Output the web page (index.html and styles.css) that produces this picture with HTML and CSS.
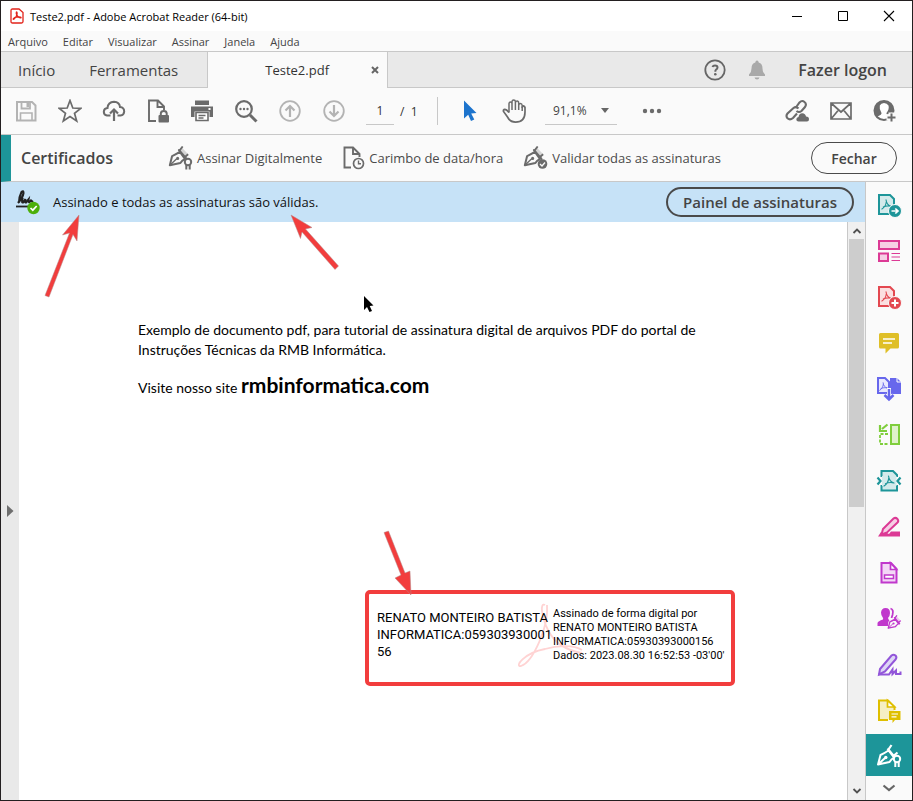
FILE: index.html
```
<!DOCTYPE html>
<html lang="pt-BR">
<head>
<meta charset="utf-8">
<title>Teste2.pdf - Adobe Acrobat Reader (64-bit)</title>
<link rel="stylesheet" href="styles.css">
</head>
<body>
<svg class="defs" aria-hidden="true">
  <defs>
    <symbol id="nib" viewBox="0 0 24 24">
      <path d="M2 21 L4.500 11 Q8 9.500 13 6.500 L18.500 14 Q15 16 13.500 18.500 Z" fill="none" stroke="currentColor" stroke-width="2.200" stroke-linejoin="round"/>
      <path d="M2 21 L9.500 14" stroke="currentColor" stroke-width="1.500"/>
      <circle cx="10.500" cy="13.500" r="1.700" fill="currentColor"/>
      <path d="M14.500 1 L22 9 L19 12 L12.500 5 Z" fill="currentColor" opacity=".25"/>
      <path d="M12 4.500 L20 14" stroke="currentColor" stroke-width="2.400" stroke-linecap="round"/>
      <path d="M12.500 5 L16 .500 M18.500 12 L22 9" stroke="currentColor" stroke-width="2"/>
    </symbol>
    <symbol id="tre" viewBox="0 0 12 12">
      <path d="M5.500 1 C6 5 7.500 7 11 8 M5.800 3 C5.300 7 3.500 9.500 1 11 M2.500 8.800 C5 7.500 8 7.300 10.500 7.800" fill="none" stroke="currentColor" stroke-width="1.200" stroke-linecap="round"/>
    </symbol>
  </defs>
</svg>
<div class="window">
  <header class="titlebar">
    <svg class="app-icon" width="14" height="16" viewBox="0 0 14 16"><path d="M1 2.500 Q1 1 2.500 1 H9 L13 4.500 V13.500 Q13 15 11.500 15 H2.500 Q1 15 1 13.500 Z" fill="#fff" stroke="#e2231a" stroke-width="1.300"/><path d="M6.300 4 C5.500 6 8.500 10.500 11 9.800 C12 8.500 5 8.500 3.300 10.700 C2.500 12.500 5.800 10.500 7 6.500 C7.500 4.800 6.800 3.500 6.300 4" fill="none" stroke="#e2231a" stroke-width="1.200"/></svg>
    <h1 class="titlebar-text">Teste2.pdf - Adobe Acrobat Reader (64-bit)</h1>
    <div class="window-buttons">
      <button aria-label="Minimizar"><svg width="12" height="12"><path d="M1 6.500 H11" stroke="#000"/></svg></button>
      <button aria-label="Maximizar"><svg width="12" height="12"><path d="M1.500 1.500 H10.500 V10.500 H1.500 Z" fill="none" stroke="#000"/></svg></button>
      <button aria-label="Fechar janela"><svg width="12" height="12"><path d="M1 1 L11 11 M11 1 L1 11" stroke="#000" stroke-width="1.100"/></svg></button>
    </div>
  </header>
  <nav class="menubar">
    <button>Arquivo</button><button>Editar</button><button>Visualizar</button><button>Assinar</button><button>Janela</button><button>Ajuda</button>
  </nav>
  <div class="tabs">
    <div class="tabs-left"><button class="tab">Início</button><button class="tab">Ferramentas</button></div>
    <div class="tab-active"><span>Teste2.pdf</span><button class="tab-close" aria-label="Fechar guia"><svg width="8" height="8"><path d="M1 1 L7 7 M7 1 L1 7" stroke="#666" stroke-width="2"/></svg></button></div>
    <div class="tabs-right">
      <button aria-label="Ajuda"><svg width="22" height="22" viewBox="0 0 22 22"><circle cx="11" cy="11" r="9.700" fill="none" stroke="#666" stroke-width="1.800"/><path d="M8.500 8 Q9 6.500 11 6.500 Q13.500 6.500 13.500 8.600 Q13.500 10 12 10.700 Q11.300 11.200 11.300 12.700" fill="none" stroke="#666" stroke-width="2"/><circle cx="11.300" cy="15.200" r="1.300" fill="#666"/></svg></button>
      <button aria-label="Notificações"><svg width="18" height="20" viewBox="0 0 18 20"><path d="M1 16 V14.500 Q3.500 12.500 3.500 8.500 Q3.500 3.500 7.300 2.500 Q7.500 .5 9 .5 Q10.500 .5 10.700 2.500 Q14.500 3.500 14.500 8.500 Q14.500 12.500 17 14.500 V16 Z M6.500 17.500 H11.500 Q11 19.500 9 19.500 Q7 19.500 6.500 17.500" fill="#a9a9a9"/></svg></button>
      <button class="login">Fazer logon</button>
    </div>
  </div>
  <div class="toolbar">
    <button class="tool faded" aria-label="Salvar"><svg width="24" height="24" viewBox="0 0 24 24"><path d="M3 3 H18 L21.500 6.500 V21.500 H3 Z" fill="none" stroke="currentColor" stroke-width="2"/><path d="M7.500 3 V9.500 H16 V3" fill="none" stroke="currentColor" stroke-width="1.800"/><path d="M12.500 4 H15 V8 H12.500 Z" fill="currentColor"/><path d="M6.500 21 V14 H18 V21" fill="none" stroke="currentColor" stroke-width="1.600"/></svg></button>
    <button class="tool" aria-label="Favorito"><svg width="24" height="24" viewBox="0 0 24 24"><path d="M12 1.500 L14.800 9 L22.700 9.400 L16.500 14.300 L18.700 22 L12 17.600 L5.300 22 L7.500 14.300 L1.300 9.400 L9.200 9 Z" fill="none" stroke="currentColor" stroke-width="1.700"/></svg></button>
    <button class="tool" aria-label="Enviar para a nuvem"><svg width="24" height="24" viewBox="0 0 24 24"><path d="M8.500 16.500 H5 Q1.800 16 1.800 12.700 Q2 9.200 5.500 9 Q6 3 12 2.800 Q17.500 3 18 8 Q22.200 8.500 22.200 12.500 Q22 16 18.500 16.500 H15.500" fill="none" stroke="currentColor" stroke-width="2"/><path d="M12 22 V11 M8 14.500 L12 10.500 L16 14.500" fill="none" stroke="currentColor" stroke-width="2.200"/></svg></button>
    <button class="tool" aria-label="Proteger"><svg width="24" height="24" viewBox="0 0 24 24"><path d="M10 22 H3 V1.500 H12 L18 7.500 V11 M11.500 1.500 V8 H18" fill="none" stroke="currentColor" stroke-width="1.900"/><rect x="12.500" y="16" width="10.500" height="7.500" rx="1" fill="currentColor"/><path d="M14.800 16 V14.500 Q15 12 17.800 12 Q20.600 12 20.700 14.500 V16" fill="none" stroke="currentColor" stroke-width="2"/></svg></button>
    <button class="tool" aria-label="Imprimir"><svg width="24" height="24" viewBox="0 0 24 24"><path d="M5 1.500 H19 V6 H5 Z M1 7.500 H23 V18 H19.500 V12.500 H4.500 V18 H1 Z" fill="currentColor"/><path d="M6 13.500 H18 V21.500 H6 Z" fill="#fff" stroke="currentColor" stroke-width="1.600"/><path d="M8.500 16.500 H15.500 M8.500 19 H13.500" stroke="currentColor" stroke-width="1.300"/><rect x="18.500" y="9" width="2" height="2" fill="#fff"/></svg></button>
    <button class="tool" aria-label="Localizar"><svg width="24" height="24" viewBox="0 0 24 24"><circle cx="10" cy="10" r="7.800" fill="none" stroke="currentColor" stroke-width="2.200"/><path d="M16 16 L22.500 22.500" stroke="currentColor" stroke-width="3"/><g fill="currentColor"><circle cx="6.500" cy="10" r="1.200"/><circle cx="10" cy="10" r="1.200"/><circle cx="13.500" cy="10" r="1.200"/></g></svg></button>
    <button class="tool faded" aria-label="Página anterior"><svg width="24" height="24" viewBox="0 0 24 24"><circle cx="12" cy="12" r="9.800" fill="none" stroke="currentColor" stroke-width="1.800"/><path d="M12 18 V7 M7.500 11.500 L12 7 L16.500 11.500" fill="none" stroke="currentColor" stroke-width="2.200"/></svg></button>
    <button class="tool faded" aria-label="Próxima página"><svg width="24" height="24" viewBox="0 0 24 24"><circle cx="12" cy="12" r="9.800" fill="none" stroke="currentColor" stroke-width="1.800"/><path d="M12 6 V17 M7.500 12.500 L12 17 L16.500 12.500" fill="none" stroke="currentColor" stroke-width="2.200"/></svg></button>
    <div class="pager"><input type="text" value="1" aria-label="Página"><span>/&nbsp; 1</span></div>
    <button class="tool select-tool" aria-label="Selecionar"><svg width="24" height="24" viewBox="0 0 24 24"><path d="M6 1.500 L18.500 14 L13.200 14.500 L16.300 20.500 L13 22 L10.200 15.800 L6 19.500 Z" fill="#1d74cd"/></svg></button>
    <button class="tool" aria-label="Mão"><svg width="26" height="26" viewBox="0 0 26 26"><path d="M8 14.500 V5.500 Q8.200 4 9.500 4 Q10.800 4 11 5.500 V12 M11 11 V3.500 Q11.200 2 12.700 2 Q14.200 2 14.400 3.500 V12 M14.400 5 Q14.600 3 16 3 Q17.600 3 17.700 5 V12 M17.700 7.500 Q18 5.500 19.400 5.500 Q21 5.500 21.200 7.500 V13" fill="none" stroke="currentColor" stroke-width="1.500"/><path d="M24 9 V14 Q24 24 14.500 24.200 Q9 24 6.500 19 L2.500 13.500 Q2 11.500 3.800 11.400 Q5.500 11.400 8 14.500 M21.200 10 Q21.300 7.800 22.600 7.800 Q24 8 24 10" fill="none" stroke="currentColor" stroke-width="1.700"/></svg></button>
    <div class="zoom-box"><select aria-label="Zoom"><option>91,1%</option></select><svg width="8" height="5"><path d="M0 0 H8 L4 5 Z" fill="#666"/></svg></div>
    <button class="tool" aria-label="Mais ferramentas"><svg width="20" height="6"><g fill="currentColor"><circle cx="3" cy="3" r="2.200"/><circle cx="10" cy="3" r="2.200"/><circle cx="17" cy="3" r="2.200"/></g></svg></button>
    <div class="toolbar-right">
      <button class="tool" aria-label="Compartilhar link"><svg width="24" height="24" viewBox="0 0 24 24"><g fill="none" stroke="currentColor" stroke-width="2.100"><path d="M10.500 9 L14.500 3.500 Q17 .800 19.500 3 Q22 5 20 8 L16.500 12 Q14 14 11.500 12"/><path d="M13.500 9.500 Q11 7 8.500 9 L2.500 14.500 Q.5 17 2.500 19.300 Q5 21.500 8 19 L12 14.500"/></g><path d="M13.500 22.500 Q11.300 22.500 11.300 20.300 Q11.500 18.200 13.500 18 Q14 14.500 17.300 14.200 Q20.500 14.500 21 17.500 Q24 17.500 24 20.200 Q24 22.500 22 22.500 Z" fill="currentColor"/></svg></button>
      <button class="tool" aria-label="Enviar por e-mail"><svg width="24" height="24" viewBox="0 0 24 24"><path d="M2 4 H22 V20 H2 Z M2 4 L12 13 L22 4 M2 20 L9.500 11 M22 20 L14.500 11" fill="none" stroke="currentColor" stroke-width="1.700"/></svg></button>
      <button class="tool" aria-label="Adicionar pessoas"><svg width="24" height="24" viewBox="0 0 24 24"><circle cx="11" cy="11.500" r="9.500" fill="#fff" stroke="currentColor" stroke-width="2"/><path d="M4.500 19 Q1.500 16 1.500 11 Q2.500 2.500 11 2.500 Q19.500 3 20.500 11 V14 Q17 13 16 15 Q13 16 13.500 14 Q16.500 10 15.500 6.500 Q14 4 11 4 Q8 4 6.800 6.500 Q6 10 8.500 14 Q9 15.500 4.500 17.500 Z" fill="currentColor"/><path d="M18.500 13.500 V23.500 M13.500 18.500 H23.500" stroke="#fafafa" stroke-width="6"/><path d="M18.500 14.500 V22.500 M14.500 18.500 H22.500" stroke="currentColor" stroke-width="2"/></svg></button>
    </div>
  </div>
  <section class="certbar">
    <h2>Certificados</h2>
    <button class="cert-action sign"><svg width="26" height="24" viewBox="0 0 26 24"><use href="#nib" width="22" height="22"/><circle cx="20" cy="16" r="3.200" fill="#fafafa" stroke="currentColor" stroke-width="2"/><path d="M18.300 19 V23.500 M21.700 19 V23.500" stroke="currentColor" stroke-width="2"/></svg><span>Assinar Digitalmente</span></button>
    <button class="cert-action stamp"><svg width="24" height="24" viewBox="0 0 24 24"><path d="M9 21.500 H2.500 V1.500 H11 L17.500 8 V11 M11 1.500 V8 H17" fill="none" stroke="currentColor" stroke-width="1.900"/><circle cx="16.500" cy="17.500" r="5" fill="#fafafa" stroke="currentColor" stroke-width="1.700"/><path d="M16.500 14.500 V17.700 H19" fill="none" stroke="currentColor" stroke-width="1.400"/></svg><span>Carimbo de data/hora</span></button>
    <button class="cert-action validate"><svg width="26" height="24" viewBox="0 0 26 24"><use href="#nib" width="22" height="22"/><circle cx="19.500" cy="18" r="4.800" fill="currentColor"/><path d="M17 18 L19 20 L22 16.500" fill="none" stroke="#fafafa" stroke-width="1.300"/></svg><span>Validar todas as assinaturas</span></button>
    <button class="pill close-pill">Fechar</button>
  </section>
  <div class="workspace">
    <main class="viewer">
      <div class="status">
        <svg width="26" height="26" viewBox="0 0 26 26"><path d="M3 14 Q8 8 8.500 4 Q8.500 1 6.500 3 Q4 8 4 13.500 Q6 8 7.500 9.500 Q6.500 14 8 13.500 L10.500 10 Q9.500 14 11 13.500 L13.500 10.500 Q13 13.500 14.500 13 L16 11.500 L18 13" fill="none" stroke="#222" stroke-width="2.100"/><path d="M1 17.500 H14" stroke="#222" stroke-width="1.800"/><circle cx="18.500" cy="19" r="6.200" fill="#4caf0a"/><path d="M15.500 19 L17.800 21.200 L21.700 17" fill="none" stroke="#fff" stroke-width="1.700"/></svg>
        <p>Assinado e todas as assinaturas são válidas.</p>
        <button class="pill panel-pill">Painel de assinaturas</button>
      </div>
      <div class="document-area">
        <button class="pane-toggle" aria-label="Abrir painel de navegação"><svg width="7" height="12"><path d="M0 0 L6.500 6 L0 12 Z" fill="#6e6e6e"/></svg></button>
        <article class="page">
          <p>Exemplo de documento pdf, para tutorial de assinatura digital de arquivos PDF do portal de Instruções Técnicas da RMB Informática.</p>
          <p class="visit">Visite nosso site <strong>rmbinformatica.com</strong></p>
          <div class="signature">
            <svg class="watermark" width="68" height="68" viewBox="0 0 68 68"><path d="M29 3 C24 0 25 14 32 28 C39 42 50 48 66 51 M31 3 C33 24 17 60 5 64 C-2 65 8 51 29 47 C42 43 58 43 66 48" fill="none" stroke="#ffd3d3" stroke-width="1.800"/></svg>
            <div class="signer">RENATO MONTEIRO BATISTA<br>INFORMATICA:059303930001<br>56</div>
            <div class="details">Assinado de forma digital por<br>RENATO MONTEIRO BATISTA<br>INFORMATICA:05930393000156<br>Dados: 2023.08.30 16:52:53 -03'00'</div>
          </div>
        </article>
        <div class="scrollbar">
          <button aria-label="Rolar para cima"><svg width="10" height="7"><path d="M1.500 6 L5 2.500 L8.500 6" fill="none" stroke="#505050" stroke-width="1.800"/></svg></button>
          <div class="thumb"></div>
          <button class="down" aria-label="Rolar para baixo"><svg width="10" height="7"><path d="M1.500 1 L5 4.500 L8.500 1" fill="none" stroke="#505050" stroke-width="1.800"/></svg></button>
        </div>
      </div>
      <svg class="annotations" width="864" height="618" viewBox="1 182 864 618" aria-hidden="true">
        <g fill="#f23d3d" stroke="#b58a8a" stroke-width=".500">
          <path d="M45 295.500 L69.500 233 L62.500 235 L79 215 L77 241 L73 234.500 L49 297 Z"/>
          <path d="M291 215 L312 227.500 L305.500 229 L338.500 266 L335 269.500 L302 232 L300.500 238.500 Z"/>
          <path d="M384 532.500 L388.500 531 L405 573 L410 571 L411 595 L395 578 L401 575 Z"/>
        </g>
        <path d="M364 296 L364 310 L367 307 L369.500 312 L372 311 L369.700 306 L373.500 305.500 Z" fill="#000"/>
      </svg>
    </main>
    <aside class="rail">
      <button class="teal" aria-label="Exportar PDF"><svg width="26" height="26" viewBox="0 0 26 26"><path d="M3 3 H14 L18 7 V22 H3 Z" fill="#d3eaeb" stroke="currentColor" stroke-width="2"/><use href="#tre" x="5" y="7" width="11" height="11"/><circle cx="19" cy="19" r="6.500" fill="currentColor" stroke="#fafafa"/><path d="M15.500 19 H21 M19.300 16.500 L22 19 L19.300 21.500" fill="none" stroke="#fff" stroke-width="1.700"/></svg></button>
      <button class="pink" aria-label="Organizar páginas"><svg width="26" height="26" viewBox="0 0 26 26"><path d="M3 3 H23 V11 H3 Z M3 15.500 H12 V23 H3 Z" fill="#f6cfe5" stroke="currentColor" stroke-width="2"/><path d="M15.500 15.500 H24 M15.500 19 H24 M15.500 22.500 H24" stroke="currentColor" stroke-width="1.200"/></svg></button>
      <button class="red" aria-label="Criar PDF"><svg width="26" height="26" viewBox="0 0 26 26"><path d="M3 3 H14 L18 7 V22 H3 Z" fill="#fbdfe0" stroke="currentColor" stroke-width="2"/><use href="#tre" x="5" y="7" width="11" height="11"/><circle cx="19" cy="19" r="6.500" fill="currentColor" stroke="#fafafa"/><path d="M19 15.500 V22.500 M15.500 19 H22.500" stroke="#fff" stroke-width="2"/></svg></button>
      <button class="yellow" aria-label="Comentário"><svg width="26" height="26" viewBox="0 0 26 26"><path d="M4.500 3 H21.500 Q23 3 23 4.500 V17 Q23 18.500 21.500 18.500 H14.500 L9.500 23.500 V18.500 H4.500 Q3 18.500 3 17 V4.500 Q3 3 4.500 3" fill="currentColor"/><path d="M7 9 H19 M7 13 H16" stroke="#fff" stroke-width="1.700"/></svg></button>
      <button class="indigo" aria-label="Combinar arquivos"><svg width="26" height="26" viewBox="0 0 26 26"><path d="M14 2 H21 L25 6 V18 H14 Z" fill="currentColor"/><path d="M21 1 V6 H26" fill="none" stroke="#fff"/><path d="M2 2 H9 L13 6 V17 H2 Z" fill="#e8e8fd" stroke="currentColor" stroke-width="2"/><use href="#tre" x="3" y="6" width="9" height="9"/><path d="M13 12 V24 M8.500 19 L13 23.500 L17.500 19" fill="none" stroke="#fafafa" stroke-width="4"/><path d="M13 13 V23 M8.500 19 L13 23.500 L17.500 19" fill="none" stroke="currentColor" stroke-width="2.500"/></svg></button>
      <button class="green" aria-label="Comparar arquivos"><svg width="26" height="26" viewBox="0 0 26 26"><path d="M15 3 H23 V22 H15 Z" fill="#dff2cb" stroke="currentColor" stroke-width="2"/><path d="M12 12 H4 V22 H13" fill="none" stroke="currentColor" stroke-width="1.800" stroke-dasharray="3 1.500"/><path d="M11.500 2.500 L6 7 M4 3 V9 H11" fill="none" stroke="currentColor" stroke-width="2.200"/></svg></button>
      <button class="teal" aria-label="Compactar PDF"><svg width="26" height="26" viewBox="0 0 26 26"><path d="M5.500 9 V3 H17 L21 7 V9 M21 17 V22.500 H5.500 V17" fill="#d3eaeb" stroke="currentColor" stroke-width="2"/><path d="M6 8 H20.500 V18 H6 Z" fill="#d3eaeb"/><use href="#tre" x="7" y="7" width="12" height="12"/><path d="M1.500 9.500 L4.500 13 L1.500 16.500 M24.500 9.500 L21.500 13 L24.500 16.500" fill="none" stroke="currentColor" stroke-width="2.200"/></svg></button>
      <button class="pink" aria-label="Redigir"><svg width="26" height="26" viewBox="0 0 26 26"><path d="M2 22.500 L5 18 H9 L13 20 L15 17.500 H24 V22.500 Z" fill="currentColor"/><path d="M7 15 L17.500 4.500 Q19.500 3 21.500 5 Q23 7 21.500 8.500 L11 18.500 L5.500 20.500 Z" fill="#f6cfe5" stroke="currentColor" stroke-width="2"/></svg></button>
      <button class="magenta" aria-label="Preparar formulário"><svg width="26" height="26" viewBox="0 0 26 26"><path d="M5.500 3 H15 L20.500 9 V22.500 H5.500 Z" fill="#f3d7f6" stroke="currentColor" stroke-width="2"/><path d="M14.500 3 V9.500 H20.500 Z" fill="#fff" stroke="currentColor" stroke-width="1.700"/><path d="M8.500 15 H17.500 V18.500 H8.500 Z" fill="#fff" stroke="currentColor" stroke-width="1.500"/></svg></button>
      <button class="magenta" aria-label="Solicitar assinaturas"><svg width="26" height="26" viewBox="0 0 26 26"><path d="M9.500 2 Q14 2 14 7 Q14 10 12 12 Q12 14 15 15 L13 20 H1.500 V17 Q2 15 7 13.500 Q7.500 12 6.500 11 Q5 9 5 6.500 Q5.500 2 9.500 2" fill="currentColor"/><path d="M14.500 2.500 Q18 3.500 16.500 9 L15.500 12" fill="none" stroke="currentColor" stroke-width="1.800"/><circle cx="18" cy="18" r="6" fill="#fafafa"/><use href="#nib" x="11" y="9" width="15" height="15"/></svg></button>
      <button class="violet" aria-label="Preencher e assinar"><svg width="26" height="26" viewBox="0 0 26 26"><path d="M4 17 L15.500 3.500 Q17.500 2 19.500 3.500 Q21.300 5.500 19.500 7.500 L9 19.500 L3 22.500 Z" fill="#ddd5f6" stroke="currentColor" stroke-width="2"/><path d="M2 22.500 H13 L16.500 17.500 V22 L20 18.500 V22 H24.500 V19.500" fill="none" stroke="currentColor" stroke-width="2"/></svg></button>
      <button class="gold" aria-label="Enviar para comentários"><svg width="26" height="26" viewBox="0 0 26 26"><path d="M12 22 H3 V2.500 H12 L18.500 9 V12" fill="#f5efc4" stroke="currentColor" stroke-width="2"/><path d="M11.500 2.500 V9 H18.500 Z" fill="#fff" stroke="currentColor" stroke-width="1.700"/><path d="M13 13 H24.500 V22 H19 L16.500 25 V22 H13 Z" fill="currentColor"/><path d="M15.500 16 H22 M15.500 18.800 H20.500" stroke="#fff" stroke-width="1.200"/></svg></button>
      <button class="active" aria-label="Certificados"><svg width="26" height="26" viewBox="0 0 26 26"><path d="M2 22.500 L4.500 13 Q8 11.500 12.500 8.500 L18 15.500 Q15 17.500 13.500 20 Z M2 22.500 L9 16" fill="none" stroke="currentColor" stroke-width="2" stroke-linejoin="round"/><circle cx="9.800" cy="15.500" r="1.700" fill="currentColor"/><path d="M11.500 6.500 L19 15.500 M12.500 7.500 L15.500 3 M18 13.500 L21.500 10.500" stroke="currentColor" stroke-width="2.200"/><circle cx="21" cy="17" r="3.200" fill="#1d9599" stroke="currentColor" stroke-width="2"/><path d="M19.300 20 V25 M22.700 20 V25" stroke="currentColor" stroke-width="2"/></svg></button>
      <button class="more" aria-label="Mais"><svg width="14" height="8"><path d="M1.500 1.500 L7 6 L12.500 1.500" fill="none" stroke="currentColor" stroke-width="2.200"/></svg></button>
    </aside>
  </div>
</div>
</body>
</html>
```
FILE: styles.css
```
* { box-sizing: border-box; }

body {
  margin: 0;
  background: #fafafa;
  font-family: "Open Sans", "Noto Sans", sans-serif;
  font-size: 13px;
  color: #444;
}

button, input, select {
  font: inherit;
  color: inherit;
  background: none;
  border: 0;
  padding: 0;
  margin: 0;
}

svg { display: block; flex: none; }
h1, h2, p { margin: 0; font-weight: 400; }
.defs { position: absolute; width: 0; height: 0; }

.window {
  display: flex;
  flex-direction: column;
  min-height: 100vh;
  border: 1px solid #231f20;
}

.titlebar {
  display: flex;
  align-items: center;
  height: 30px;
  padding-left: 9px;
  gap: 6px;
  background: #fff;
  color: #000;
}
.titlebar-text { flex: 1; font-size: 11px; }
.window-buttons { display: flex; }
.window-buttons button { display: grid; place-items: center; width: 46px; height: 30px; }

.menubar {
  display: flex;
  gap: 15px;
  height: 20px;
  padding-left: 7px;
  font-size: 11px;
}

.tabs {
  display: flex;
  height: 37px;
  background: #e9e9e9;
  border-top: 1px solid #c8c8c8;
  font-size: 15px;
}
.tabs-left {
  display: flex;
  align-items: center;
  gap: 34px;
  width: 207px;
  padding-left: 17px;
  border-right: 1px solid #c8c8c8;
  border-bottom: 1px solid #c8c8c8;
}
.tab-active {
  display: flex;
  align-items: center;
  justify-content: flex-end;
  gap: 42px;
  width: 179px;
  padding-right: 8px;
  background: #fafafa;
  font-size: 13px;
  color: #333;
}
.tabs-right {
  display: flex;
  flex: 1;
  align-items: center;
  justify-content: flex-end;
  padding-right: 25px;
  border-left: 1px solid #c8c8c8;
  border-bottom: 1px solid #c8c8c8;
}
.tabs-right button { margin-left: 22px; }
.tabs-right .login { margin-left: 32px; font-size: 16px; font-weight: 600; }

.toolbar {
  display: flex;
  align-items: center;
  height: 47px;
  padding: 0 5px 0 3px;
  border-bottom: 1px solid #c8c8c8;
  color: #6b6b6b;
}
.tool { display: grid; place-items: center; width: 44px; height: 44px; }
.faded { color: #b3b3b3; }
.pager {
  display: flex;
  align-items: center;
  gap: 6px;
  height: 28px;
  width: 72px;
  margin-left: 10px;
  border-right: 1px solid #c8c8c8;
  font-size: 12px;
  color: #333;
}
.pager input {
  width: 28px;
  height: 28px;
  text-align: center;
  border-bottom: 1px solid #c8c8c8;
}
.select-tool { margin-left: 10px; }
.zoom-box {
  display: flex;
  align-items: center;
  width: 72px;
  height: 28px;
  margin: 0 13px 0 9px;
  padding: 0 8px;
  border-bottom: 1px solid #c8c8c8;
  font-size: 12px;
  color: #444;
}
.zoom-box select { flex: 1; min-width: 0; appearance: none; }
.toolbar-right { display: flex; margin-left: auto; }

.certbar {
  display: flex;
  align-items: center;
  height: 47px;
  padding-right: 15px;
  border-left: 10px solid #1d9599;
  border-bottom: 1px solid #c8c8c8;
}
.certbar h2 { width: 157px; padding-left: 10px; font-size: 16px; font-weight: 600; }
.cert-action { display: flex; align-items: center; gap: 3px; color: #6b6b6b; white-space: nowrap; }
.cert-action span { color: #4a4a4a; }
.stamp, .validate { margin-left: 20px; }
.pill {
  margin-left: auto;
  border: 2px solid #4a4a4a;
  border-radius: 16px;
  font-weight: 600;
}
.close-pill { width: 86px; height: 32px; border-width: 1px; font-size: 14px; }

.workspace { display: flex; flex: 1; }
.viewer { position: relative; display: flex; flex: 1; flex-direction: column; }
.status {
  display: flex;
  align-items: center;
  height: 40px;
  padding: 0 11px 0 14px;
  gap: 12px;
  background: #c6e2f7;
  color: #111;
}
.panel-pill { width: 188px; height: 30px; font-size: 15px; color: #444; }

.document-area { display: flex; flex: 1; background: #fff; }
.pane-toggle { display: flex; align-items: center; width: 18px; padding-left: 6px; background: #e9e9e9; }
.page {
  flex: 1;
  padding: 98px 112px 0 119px;
  font-family: Lato, sans-serif;
  font-size: 14px;
  line-height: 20px;
  color: #000;
}
.visit { margin-top: 13px; line-height: 24px; }
.visit strong { font-size: 21px; }
.signature {
  position: relative;
  display: flex;
  gap: 4px;
  width: 370px;
  height: 96px;
  margin: 190px 0 0 227px;
  padding: 13px 8px;
  border: 4px solid #f23d3d;
  border-radius: 5px;
  font-family: Roboto, sans-serif;
}
.watermark { position: absolute; left: 147px; top: 8px; }
.signer { position: relative; width: 172px; padding-top: 2px; font-size: 13px; line-height: 17px; white-space: nowrap; }
.details { position: relative; font-size: 11px; line-height: 14px; white-space: nowrap; }

.scrollbar {
  display: flex;
  flex-direction: column;
  width: 18px;
  border-left: 1px solid #c8c8c8;
  background: #f0f0f0;
}
.scrollbar button { display: grid; place-items: center; height: 17px; }
.thumb { height: 268px; margin: 0 1px; background: #cdcdcd; }
.scrollbar .down { margin-top: auto; }
.annotations { position: absolute; left: 0; top: 0; pointer-events: none; }

.rail {
  display: flex;
  flex-direction: column;
  width: 47px;
  border-left: 1px solid #c8c8c8;
}
.rail button { display: grid; place-items: center; height: 46px; }
.rail .active { height: 42px; background: #1d9599; color: #fff; }
.rail .more { height: 24px; color: #666; }
.teal { color: #1d9599; }
.pink { color: #dc3a95; }
.red { color: #e34850; }
.yellow { color: #dfbf27; }
.indigo { color: #6767ec; }
.green { color: #7fce3c; }
.magenta { color: #c038cc; }
.violet { color: #9256d9; }
.gold { color: #dfbf00; }
```
